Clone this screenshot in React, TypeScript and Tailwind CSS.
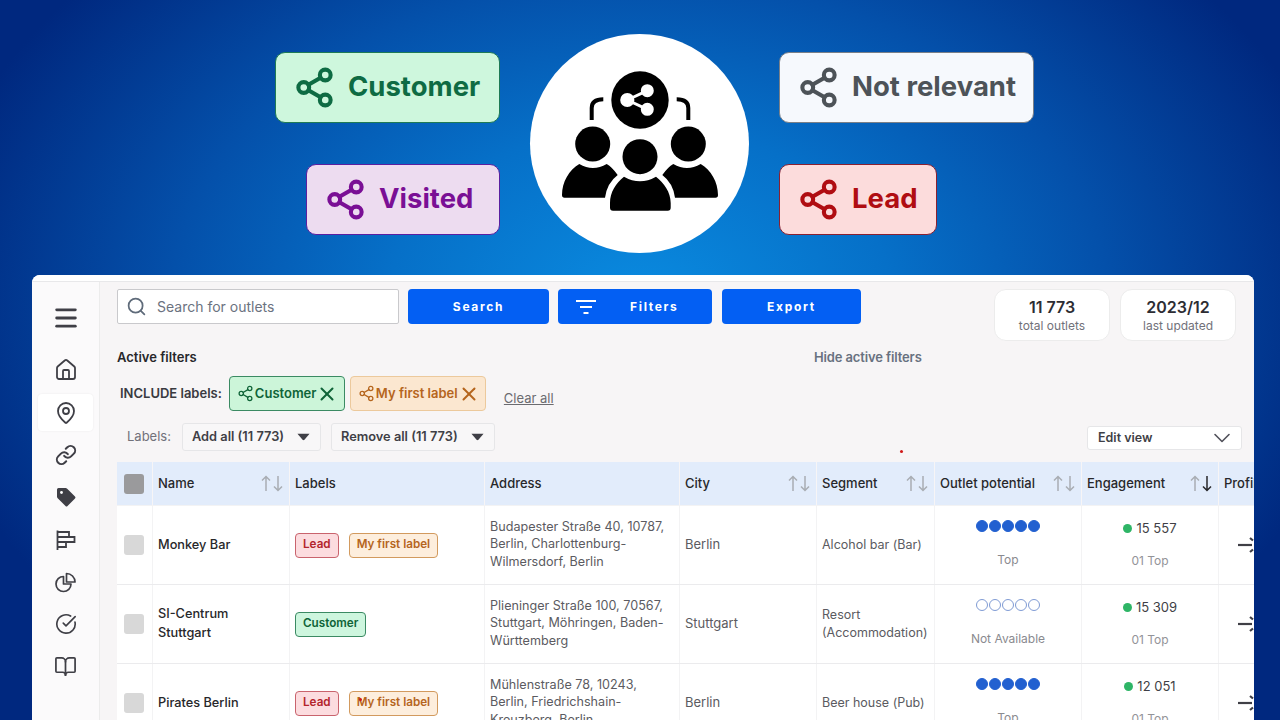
import {
  BookOpen,
  ChevronDown,
  CircleCheckBig,
  House,
  Link,
  MapPin,
  Menu,
  Search,
  Share2,
  X,
} from "lucide-react";

const badges = {
  customer: "w-[225px] border-[#1e7a55] bg-[#cef7dd] text-[#0e6b43]",
  visited: "w-[194px] border-[#5a1fa0] bg-[#eddcf0] text-[#7a0f95]",
  notRelevant: "w-[255px] border-[#7a8088] bg-[#f6f9fd] text-[#4d5358]",
  lead: "w-[158px] border-[#8a2030] bg-[#fcdcdc] text-[#b00d12]",
};

const tagStyles: Record<string, string> = {
  Lead: "border-[#c9636d] bg-[#fcdcdf] text-[#b3242c]",
  "My first label": "border-[#d29a5e] bg-[#fdeedd] text-[#b5651d]",
  Customer: "border-[#3b8a63] bg-[#cdf6de] text-[#0f6438]",
};

const rows = [
  {
    name: "Monkey Bar",
    labels: ["Lead", "My first label"],
    address: "Budapester Straße 40, 10787, Berlin, Charlottenburg-Wilmersdorf, Berlin",
    city: "Berlin",
    segment: "Alcohol bar (Bar)",
    filled: true,
    potential: "Top",
    engagement: "15 557",
  },
  {
    name: "SI-Centrum Stuttgart",
    labels: ["Customer"],
    address: "Plieninger Straße 100, 70567, Stuttgart, Möhringen, Baden-Württemberg",
    city: "Stuttgart",
    segment: "Resort (Accommodation)",
    filled: false,
    potential: "Not Available",
    engagement: "15 309",
  },
  {
    name: "Pirates Berlin",
    labels: ["Lead", "My first label"],
    address: "Mühlenstraße 78, 10243, Berlin, Friedrichshain-Kreuzberg, Berlin",
    city: "Berlin",
    segment: "Beer house (Pub)",
    filled: true,
    potential: "Top",
    engagement: "12 051",
  },
];

function HeroBadge({ text, style }: { text: string; style: string }) {
  return (
    <div
      className={`flex h-[71px] items-center gap-[12px] rounded-[10px] border pl-[17px] text-[27.5px] font-bold ${style}`}
    >
      <Share2 size={43} strokeWidth={2.3} className="flex-none" />
      <span className="pb-[2px]">{text}</span>
    </div>
  );
}

function PeopleIcon() {
  return (
    <svg viewBox="530 34 219 219" className="h-[219px] w-[219px]">
      <circle cx="640" cy="100" r="28.7" fill="#000" />
      <g stroke="#fff" strokeWidth="3" fill="#fff">
        <path d="M627.3 100 L647.3 90.7 M627.3 100 L647.3 109.3" />
        <circle cx="627.3" cy="100" r="5.6" />
        <circle cx="647.3" cy="90.7" r="5" />
        <circle cx="647.3" cy="109.3" r="5" />
      </g>
      <g stroke="#000" strokeWidth="4" fill="none">
        <path d="M591.7 120 V108 Q591.7 99.3 603.3 99.3" />
        <path d="M688.3 120 V108 Q688.3 99.3 676.7 99.3" />
      </g>
      <circle cx="592.7" cy="144" r="17.5" />
      <circle cx="688.3" cy="144" r="17.5" />
      <circle cx="640" cy="156.7" r="17.5" />
      <path d="M613 210.7 Q610 210.7 610 207.5 V203 C610 192 616 183 624 176.7 Q640 186 656 176.7 C664 183 670.7 192 670.7 203 V207.5 Q670.7 210.7 667.7 210.7 Z" />
      <path d="M564.5 197.7 Q562 197.7 562 195 C562 182 569 170 579.3 164 Q593 172 606.7 164 Q612 167 617.7 175 Q607 183 605 197.7 Z" />
      <path d="M715.5 197.7 Q718 197.7 718 195 C718 182 711 170 700.7 164 Q687 172 673.3 164 Q668 167 662.3 175 Q673 183 675 197.7 Z" />
    </svg>
  );
}

function BarsIcon() {
  return (
    <svg viewBox="0 0 24 24" width="24" height="24" fill="none" stroke="currentColor" strokeWidth="1.8">
      <path d="M3.5 2.5 V22" />
      <path d="M3.5 4 H15 V9 H3.5 M15 9 H20.5 V14 H3.5 M12 14 V19 H3.5" />
    </svg>
  );
}

function TagIcon() {
  return (
    <svg viewBox="0 0 24 24" width="24" height="24">
      <path
        d="M3 4.5 Q3 3 4.5 3 H11.5 Q12.5 3 13.2 3.7 L21 11.5 Q22 12.5 21 13.5 L13.5 21 Q12.5 22 11.5 21 L3.7 13.2 Q3 12.5 3 11.5 Z"
        fill="#3f3f46"
      />
      <circle cx="7.5" cy="7.5" r="1.4" fill="#fff" />
    </svg>
  );
}

// pie with the top right slice pulled out
function PieIcon() {
  return (
    <svg viewBox="0 0 24 24" width="24" height="24" fill="none" stroke="currentColor" strokeWidth="1.7" strokeLinejoin="round">
      <path d="M9.5 6.5 A7.5 7.5 0 1 0 17 14 H9.5 Z" />
      <path d="M12.5 3.5 A8.5 8.5 0 0 1 21 12 H12.5 Z" />
    </svg>
  );
}

function SortArrows({ active }: { active?: boolean }) {
  return (
    <span className="flex flex-none gap-[2px]">
      <svg viewBox="0 0 10 17" width="10" height="17" fill="none" stroke="#a9adb3" strokeWidth="1.5">
        <path d="M5 16 V1.5 M1 5.5 L5 1.5 L9 5.5" />
      </svg>
      <svg viewBox="0 0 10 17" width="10" height="17" fill="none" stroke={active ? "#27272a" : "#a9adb3"} strokeWidth="1.5">
        <path d="M5 1 V15.5 M1 11.5 L5 15.5 L9 11.5" />
      </svg>
    </span>
  );
}

function Sidebar() {
  const navClass = "flex h-[42.3px] w-full items-center justify-center text-[#3f3f46]";
  return (
    <aside className="flex w-[68px] flex-none flex-col items-center border-r border-[#ececec] bg-[#fbfafb] px-[6px] pt-[15px]">
      <div className={`${navClass} mb-[10px]`}>
        <Menu size={28} strokeWidth={2.4} />
      </div>
      <div className={navClass}>
        <House size={24} strokeWidth={1.8} />
      </div>
      <div className={navClass}>
        <div className="flex h-[37px] w-full items-center justify-center rounded-[4px] bg-white shadow-[0_0_2px_rgba(0,0,0,0.08)]">
          <MapPin size={24} strokeWidth={1.8} />
        </div>
      </div>
      <div className={navClass}>
        <Link size={22} strokeWidth={2.2} />
      </div>
      <div className={navClass}>
        <TagIcon />
      </div>
      <div className={navClass}>
        <BarsIcon />
      </div>
      <div className={navClass}>
        <PieIcon />
      </div>
      <div className={navClass}>
        <CircleCheckBig size={22} strokeWidth={1.8} />
      </div>
      <div className={navClass}>
        <BookOpen size={23} strokeWidth={1.8} />
      </div>
    </aside>
  );
}

function BlueButton({ text, width }: { text: string; width: string }) {
  return (
    <button
      className={`h-[35px] rounded-[4px] bg-[#035ff3] text-[12px] font-bold tracking-[0.14em] text-white ${width}`}
    >
      {text}
    </button>
  );
}

function StatBox({ value, label }: { value: string; label: string }) {
  return (
    <div className="flex h-[52px] w-[116px] flex-col items-center justify-center rounded-[12px] border border-[#ececec] bg-white">
      <span className="text-[16px] leading-[22px] font-semibold text-[#2d2d33]">{value}</span>
      <span className="text-[12px] leading-[16px] text-[#71717a]">{label}</span>
    </div>
  );
}

function Toolbar() {
  return (
    <div className="flex items-start">
      <div className="flex h-[35px] w-[282px] items-center rounded-[2px] border border-[#c9c9cc] bg-white pl-[8px]">
        <Search size={21} strokeWidth={2} className="text-[#5f6b7a]" />
        <span className="ml-[10px] text-[14px] text-[#6b7280]">Search for outlets</span>
      </div>
      <div className="ml-[9px]">
        <BlueButton text="Search" width="w-[141px]" />
      </div>
      <button className="ml-[9px] flex h-[35px] w-[154px] items-center rounded-[4px] bg-[#035ff3] pl-[18px] text-[12px] font-bold tracking-[0.14em] text-white">
        <svg viewBox="0 0 20 14" width="20" height="14" fill="none" stroke="#fff" strokeWidth="2">
          <path d="M0 1 H20 M4 7 H16 M7.5 13 H12.5" />
        </svg>
        <span className="ml-[34px]">Filters</span>
      </button>
      <div className="ml-[10px]">
        <BlueButton text="Export" width="w-[139px]" />
      </div>
      <div className="ml-[133px] flex gap-[10px]">
        <StatBox value="11 773" label="total outlets" />
        <StatBox value="2023/12" label="last updated" />
      </div>
    </div>
  );
}

function FilterChip({ text, style }: { text: string; style: string }) {
  return (
    <div
      className={`flex h-[35px] items-center rounded-[4px] border pl-[7px] text-[13px] font-semibold whitespace-nowrap ${style}`}
    >
      <Share2 size={17} strokeWidth={1.8} className="flex-none" />
      <span className="ml-[1px]">{text}</span>
      <X size={22} strokeWidth={2.2} className="flex-none" />
    </div>
  );
}

function DropButton({ text, width }: { text: string; width: string }) {
  return (
    <div
      className={`flex h-[28px] items-center justify-between rounded-[3px] border border-[#e6e6e8] bg-[#f8f7f8] pr-[10px] pl-[9px] text-[12.8px] font-semibold text-[#3f3f46] ${width}`}
    >
      <span>{text}</span>
      <svg viewBox="0 0 14 8" width="13" height="8">
        <path d="M0.5 0.5 H13.5 L8 7 Q7 8 6 7 Z" fill="#3f3f46" />
      </svg>
    </div>
  );
}

function Filters() {
  return (
    <>
      <div className="mt-[7px] flex h-[20px] items-center text-[13px] font-semibold">
        <span className="w-[697px] text-[#27272a]">Active filters</span>
        <span className="tracking-[-0.01em] text-[#687180]">Hide active filters</span>
      </div>
      <div className="mt-[8px] flex items-center pl-[3px]">
        <span className="mr-[7px] text-[13px] font-semibold text-[#3a3a40]">INCLUDE labels:</span>
        <FilterChip text="Customer" style="w-[116px] border-[#3b8a63] bg-[#ccf5d9] text-[#0f6438]" />
        <div className="ml-[5px]">
          <FilterChip text="My first label" style="w-[136px] border-[#ecc99c] bg-[#fbe7d0] text-[#b5651d]" />
        </div>
        <span className="mt-[10px] ml-[18px] text-[13px] text-[#6b6b70] underline">Clear all</span>
      </div>
      <div className="mt-[12px] flex items-center pl-[10px]">
        <span className="w-[55px] text-[13px] text-[#71717a]">Labels:</span>
        <DropButton text="Add all (11 773)" width="w-[139px]" />
        <div className="ml-[10px]">
          <DropButton text="Remove all (11 773)" width="w-[164px]" />
        </div>
        <div className="mt-[2px] ml-[592px] flex h-[24px] w-[155px] items-center justify-between rounded-[3px] border border-[#e6e6e8] bg-white pr-[5px] pl-[10px] text-[12.5px] font-semibold text-[#3f3f46]">
          <span>Edit view</span>
          <ChevronDown size={28} strokeWidth={1.4} className="text-[#52525b]" />
        </div>
      </div>
    </>
  );
}

function HeadCell({ text, sort, active }: { text: string; sort?: boolean; active?: boolean }) {
  return (
    <div className="mr-[1px] flex items-center justify-between overflow-hidden bg-[#e2ecfb] pr-[6px] pl-[5px] text-[13px] font-medium text-[#27272a]">
      <span className="whitespace-nowrap">{text}</span>
      {sort && <SortArrows active={active} />}
    </div>
  );
}

function Dots({ filled }: { filled: boolean }) {
  return (
    <div className="flex">
      {[0, 1, 2, 3, 4].map((i) => (
        <span
          key={i}
          className={`mr-[1px] h-[12px] w-[12px] rounded-full border ${
            filled ? "border-[#2260d0] bg-[#2260d0]" : "border-[#7f9bd4] bg-white"
          }`}
        />
      ))}
    </div>
  );
}

function ProfileArrow() {
  return (
    <svg viewBox="0 0 18 18" width="18" height="18" fill="none" stroke="#3f3f46" strokeWidth="2.2" className="flex-none">
      <path d="M0 9 H14" />
      <path d="M12 2 L15 4.5 M12 16 L15 13.5" />
    </svg>
  );
}

function Row({ row }: { row: (typeof rows)[number] }) {
  const cell = "flex items-center border-r border-[#f3f3f4] px-[5px] overflow-hidden";
  return (
    <div className="grid h-[79px] grid-cols-[36px_137px_195px_195px_137px_118px_147px_137px_120px] border-b border-[#ebebed] bg-white">
      <div className="flex items-center border-r border-[#f3f3f4] pl-[7px]">
        <span className="h-[20px] w-[20px] rounded-[3px] bg-[#d8d8d8]" />
      </div>
      <div className={`${cell} pb-[2px] text-[12.75px] leading-[19px] font-medium text-[#27272a]`}>{row.name}</div>
      <div className={`${cell} gap-[10px]`}>
        {row.labels.map((l) => (
          <span
            key={l}
            className={`flex h-[25px] items-center rounded-[4px] border px-[7px] text-[11.7px] font-semibold ${tagStyles[l]}`}
          >
            {l}
          </span>
        ))}
      </div>
      <div className={`${cell} pb-[2px] text-[12.6px] leading-[17.5px] text-[#5b5b61]`}>
        <span className="w-[180px]">{row.address}</span>
      </div>
      <div className={`${cell} text-[13px] text-[#5b5b61]`}>{row.city}</div>
      <div className={`${cell} text-[12.5px] leading-[18px] text-[#5b5b61]`}>{row.segment}</div>
      <div className="flex flex-col items-center border-r border-[#f3f3f4] pt-[14px]">
        <Dots filled={row.filled} />
        <span className="mt-[20px] text-[12px] leading-[16px] text-[#8a8a8f]">{row.potential}</span>
      </div>
      <div className="flex flex-col items-center border-r border-[#f3f3f4] pt-[13px]">
        <div className="flex items-center gap-[4px] text-[13px] leading-[18px] text-[#3f3f46]">
          <span className="h-[9px] w-[9px] rounded-full bg-[#2eb566]" />
          {row.engagement}
        </div>
        <span className="mt-[16px] text-[12px] leading-[16px] text-[#939398]">01 Top</span>
      </div>
      <div className="flex items-center pl-[19px]">
        <ProfileArrow />
      </div>
    </div>
  );
}

function OutletTable() {
  return (
    <div className="mt-[11px] w-[1222px]">
      <div className="grid h-[43px] grid-cols-[36px_137px_195px_195px_137px_118px_147px_137px_120px]">
        <div className="mr-[1px] flex items-center bg-[#e2ecfb] pl-[7px]">
          <span className="h-[20px] w-[20px] rounded-[3px] bg-[#9a9a9c]" />
        </div>
        <HeadCell text="Name" sort />
        <HeadCell text="Labels" />
        <HeadCell text="Address" />
        <HeadCell text="City" sort />
        <HeadCell text="Segment" sort />
        <HeadCell text="Outlet potential" sort />
        <HeadCell text="Engagement" sort active />
        <HeadCell text="Profile" />
      </div>
      <div className="border-t border-[#f3f3f4]">
        {rows.map((r) => (
          <Row key={r.name} row={r} />
        ))}
      </div>
    </div>
  );
}

export default function App() {
  return (
    <div className="h-[720px] w-[1280px] overflow-hidden bg-[radial-gradient(ellipse_720px_500px_at_50%_42%,#0a8be0_0%,#0670c8_35%,#0450aa_65%,#00287f_100%)] font-[Inter,sans-serif]">
      <div className="flex h-[275px] pt-[34px]">
        <div className="flex h-[219px] w-[500px] flex-none flex-col items-end justify-center gap-[41px]">
          <HeroBadge text="Customer" style={badges.customer} />
          <HeroBadge text="Visited" style={badges.visited} />
        </div>
        <div className="mx-[30px] flex h-[219px] w-[219px] flex-none items-center justify-center rounded-full bg-white">
          <PeopleIcon />
        </div>
        <div className="flex h-[219px] flex-col items-start justify-center gap-[41px]">
          <HeroBadge text="Not relevant" style={badges.notRelevant} />
          <HeroBadge text="Lead" style={badges.lead} />
        </div>
      </div>

      <div className="mx-[32px] h-[445px] w-[1222px] overflow-hidden rounded-t-[8px] bg-white">
        <div className="h-[7px] border-b border-[#e8e8ea] bg-white" />
        <div className="flex h-[438px]">
          <Sidebar />
          <main className="relative flex-1 overflow-hidden bg-[#f7f5f6] pt-[7px] pl-[17px]">
            <Toolbar />
            <Filters />
            <span className="absolute top-[168px] left-[800px] h-[3px] w-[3px] rounded-full bg-[#d01818]" />
            <span className="absolute top-[416px] left-[259px] z-10 h-[3px] w-[3px] rounded-full bg-[#d01818]" />
            <OutletTable />
          </main>
        </div>
      </div>
    </div>
  );
}
